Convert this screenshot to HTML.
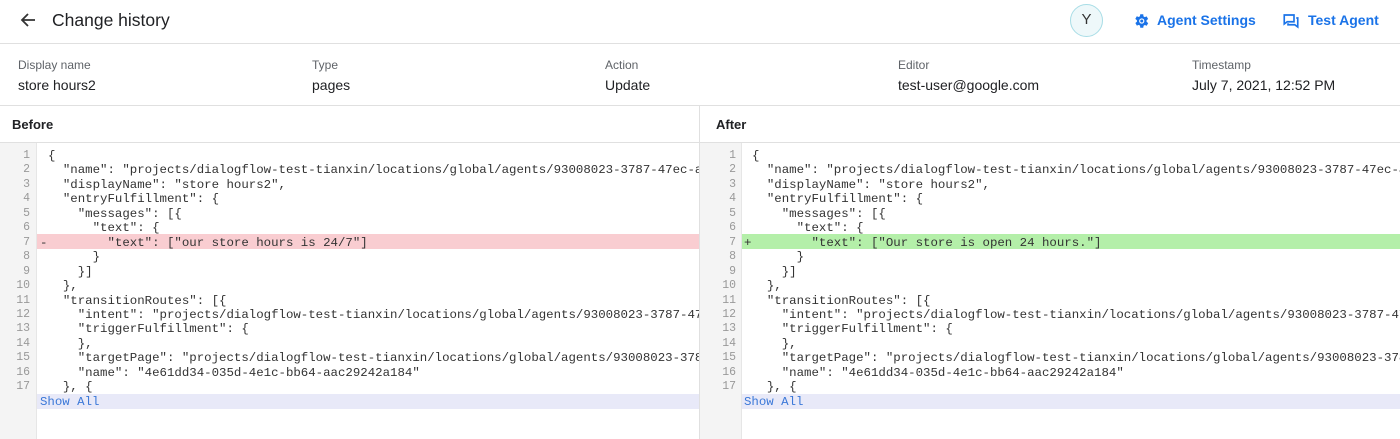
<!DOCTYPE html>
<html><head><meta charset="utf-8"><style>
*{margin:0;padding:0;box-sizing:border-box}
body{width:1400px;height:439px;overflow:hidden;background:#fff;font-family:"Liberation Sans",Arial,sans-serif;color:#202124;position:relative}
.hdr{position:absolute;left:0;top:0;width:1400px;height:44px;border-bottom:1px solid #e0e0e0}
.title{position:absolute;left:52px;top:10px;font-size:17.5px;color:#202124}
.av{position:absolute;left:1070px;top:4px;width:33px;height:33px;border-radius:50%;border:1.5px solid #a8dde6;background:#eef8fa;text-align:center;line-height:30px;font-size:15px;color:#333}
.lnk{position:absolute;top:12px;font-size:14px;color:#1a73e8;font-weight:bold}
.meta{position:absolute;top:44px;left:0;width:1400px;height:62px;border-bottom:1px solid #e0e0e0}
.col{position:absolute;top:14px}
.col .l{font-size:12px;color:#5f6368}
.col .v{font-size:14px;color:#202124;margin-top:5px}
.ph{position:absolute;top:106px;height:37px;border-bottom:1px solid #e0e0e0;font-size:13px;font-weight:bold;padding:11px 0 0 12px}
.pane{position:absolute;top:143px;height:296px;font-family:"Liberation Mono",monospace;font-size:12.4px}
.gut{position:absolute;top:0;bottom:0;left:0;background:#f4f4f4;border-right:1px solid #e6e6e6}
.ln{position:absolute;height:14.45px;line-height:14.45px;white-space:pre;color:#333}
.num{position:absolute;color:#999;text-align:right;height:14.45px;line-height:14.45px;font-size:11.5px}
</style></head><body>
<div class="hdr">
<svg style="position:absolute;left:20px;top:12px" width="16" height="16" viewBox="0 0 16 16"><path d="M15 8H2M8 2L2 8l6 6" stroke="#333" stroke-width="1.8" fill="none"/></svg>
<div class="title">Change history</div>
<div class="av">Y</div>
<svg style="position:absolute;left:1132px;top:12px" width="18" height="18" viewBox="0 0 24 24"><path fill="#1a73e8" d="M19.4 13a7.5 7.5 0 000-2l2.1-1.6-2-3.5-2.5 1a7 7 0 00-1.7-1L15 3h-4l-.4 2.7a7 7 0 00-1.7 1l-2.5-1-2 3.5L6.6 11a7.5 7.5 0 000 2l-2.1 1.6 2 3.5 2.5-1a7 7 0 001.7 1L11 21h4l.4-2.7a7 7 0 001.7-1l2.5 1 2-3.5zM13 15.5A3.5 3.5 0 1113 8.5a3.5 3.5 0 010 7z"/><circle cx="13" cy="12" r="2" fill="#1a73e8"/></svg>
<div class="lnk" style="left:1157px">Agent Settings</div>
<svg style="position:absolute;left:1282px;top:12px" width="18" height="18" viewBox="0 0 24 24"><path d="M3 4h13v9H7l-4 3z" fill="none" stroke="#1a73e8" stroke-width="2.2"/><path d="M19 8h2v12l-4-3H8v-2" fill="none" stroke="#1a73e8" stroke-width="2.2"/></svg>
<div class="lnk" style="left:1308px">Test Agent</div>
</div>
<div class="meta">
<div class="col" style="left:18px"><div class="l">Display name</div><div class="v">store hours2</div></div>
<div class="col" style="left:312px"><div class="l">Type</div><div class="v">pages</div></div>
<div class="col" style="left:605px"><div class="l">Action</div><div class="v">Update</div></div>
<div class="col" style="left:898px"><div class="l">Editor</div><div class="v">test-user@google.com</div></div>
<div class="col" style="left:1192px"><div class="l">Timestamp</div><div class="v">July 7, 2021, 12:52 PM</div></div>
</div>
<div class="ph" style="left:0;width:700px;border-right:1px solid #e0e0e0">Before</div>
<div class="ph" style="left:700px;width:700px;padding-left:16px">After</div>

<div class="pane" style="left:0;width:700px;overflow:hidden;border-right:1px solid #e0e0e0">
<div class="gut" style="width:37px"></div>
<div style="position:absolute;left:37px;right:0;top:91px;height:14.5px;background:#f9cdd1"></div>
<div style="position:absolute;left:37px;right:0;top:251px;height:14.5px;background:#e8e9f8"></div>
<div id="L"></div>
</div>
<div class="pane" style="left:700px;width:700px;overflow:hidden">
<div class="gut" style="width:42px"></div>
<div style="position:absolute;left:42px;right:0;top:91px;height:14.5px;background:#b4efa9"></div>
<div style="position:absolute;left:42px;right:0;top:251px;height:14.5px;background:#e8e9f8"></div>
<div id="R"></div>
</div>
<script>
var lines=['{','  "name": "projects/dialogflow-test-tianxin/locations/global/agents/93008023-3787-47ec-a4f',
'  "displayName": "store hours2",','  "entryFulfillment": {','    "messages": [{','      "text": {',
'X','      }','    }]','  },','  "transitionRoutes": [{',
'    "intent": "projects/dialogflow-test-tianxin/locations/global/agents/93008023-3787-47ec',
'    "triggerFulfillment": {','    },',
'    "targetPage": "projects/dialogflow-test-tianxin/locations/global/agents/93008023-3787-47',
'    "name": "4e61dd34-035d-4e1c-bb64-aac29242a184"','  }, {'];
function build(id,gw,numR,x,sign,l7){var h='';for(var i=0;i<17;i++){var t=i==6?l7:lines[i];var y=6+i*14.45;
h+='<div class="num" style="left:0;width:'+numR+'px;top:'+y+'px">'+(i+1)+'</div>';
if(i==6)h+='<div class="ln" style="left:'+(x-8)+'px;top:'+y+'px">'+sign+'</div>';
h+='<div class="ln" style="left:'+x+'px;top:'+y+'px">'+t.replace(/</g,'&lt;')+'</div>';}
h+='<div class="ln" style="left:'+(x-8)+'px;top:'+(6+17*14.45)+'px;color:#3b78d8">Show All</div>';
document.getElementById(id).innerHTML=h;}
build('L',37,30,48,'-','        "text": ["our store hours is 24/7"]');
build('R',42,36,52,'+','        "text": ["Our store is open 24 hours."]');
</script>
</body></html>
